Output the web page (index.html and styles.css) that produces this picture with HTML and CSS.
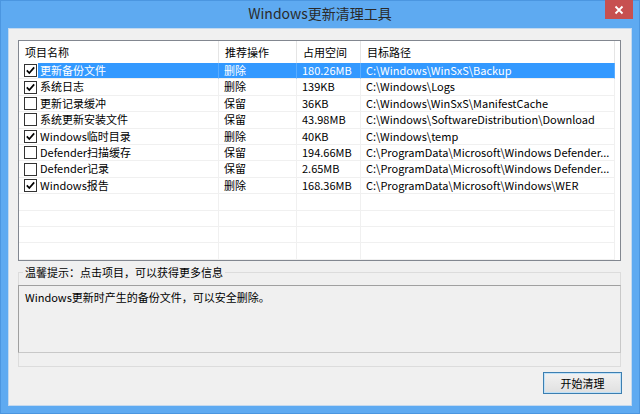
FILE: index.html
```html
<!DOCTYPE html>
<html lang="zh-CN">
<head>
  <meta charset="UTF-8" />
  <title>Windows更新清理工具</title>
  <link rel="stylesheet" href="styles.css">
</head>
<body>
  <div class="window">
    <header class="titlebar">
      <span></span>
      <h1 class="title">Windows更新清理工具</h1>
      <button class="close" aria-label="关闭">
        <svg width="10" height="10" viewBox="0 0 10 10"><path d="M1.5 1.5 L8.5 8.5 M8.5 1.5 L1.5 8.5" stroke="#fff" stroke-width="1.8"/></svg>
      </button>
    </header>

    <main class="client">
      <div class="list">
        <div class="row head">
          <div class="cell">项目名称</div>
          <div class="cell">推荐操作</div>
          <div class="cell">占用空间</div>
          <div class="cell">目标路径</div>
        </div>

        <div class="row selected">
          <div class="cell name"><span class="check"><svg viewBox="0 0 11 11"><path d="M1.8 5.4 L4.3 8 L9.2 2.4"/></svg></span><span class="label">更新备份文件</span></div>
          <div class="cell">删除</div>
          <div class="cell">180.26MB</div>
          <div class="cell">C:\Windows\WinSxS\Backup</div>
        </div>
        <div class="row">
          <div class="cell name"><span class="check"><svg viewBox="0 0 11 11"><path d="M1.8 5.4 L4.3 8 L9.2 2.4"/></svg></span><span class="label">系统日志</span></div>
          <div class="cell">删除</div>
          <div class="cell">139KB</div>
          <div class="cell">C:\Windows\Logs</div>
        </div>
        <div class="row">
          <div class="cell name"><span class="check"></span><span class="label">更新记录缓冲</span></div>
          <div class="cell">保留</div>
          <div class="cell">36KB</div>
          <div class="cell">C:\Windows\WinSxS\ManifestCache</div>
        </div>
        <div class="row">
          <div class="cell name"><span class="check"></span><span class="label">系统更新安装文件</span></div>
          <div class="cell">保留</div>
          <div class="cell">43.98MB</div>
          <div class="cell">C:\Windows\SoftwareDistribution\Download</div>
        </div>
        <div class="row">
          <div class="cell name"><span class="check"><svg viewBox="0 0 11 11"><path d="M1.8 5.4 L4.3 8 L9.2 2.4"/></svg></span><span class="label">Windows临时目录</span></div>
          <div class="cell">删除</div>
          <div class="cell">40KB</div>
          <div class="cell">C:\Windows\temp</div>
        </div>
        <div class="row">
          <div class="cell name"><span class="check"></span><span class="label">Defender扫描缓存</span></div>
          <div class="cell">保留</div>
          <div class="cell">194.66MB</div>
          <div class="cell">C:\ProgramData\Microsoft\Windows Defender...</div>
        </div>
        <div class="row">
          <div class="cell name"><span class="check"></span><span class="label">Defender记录</span></div>
          <div class="cell">保留</div>
          <div class="cell">2.65MB</div>
          <div class="cell">C:\ProgramData\Microsoft\Windows Defender...</div>
        </div>
        <div class="row">
          <div class="cell name"><span class="check"><svg viewBox="0 0 11 11"><path d="M1.8 5.4 L4.3 8 L9.2 2.4"/></svg></span><span class="label">Windows报告</span></div>
          <div class="cell">删除</div>
          <div class="cell">168.36MB</div>
          <div class="cell">C:\ProgramData\Microsoft\Windows\WER</div>
        </div>

        <!-- empty rows keep the grid lines going -->
        <div class="row"><div class="cell"></div><div class="cell"></div><div class="cell"></div><div class="cell"></div></div>
        <div class="row"><div class="cell"></div><div class="cell"></div><div class="cell"></div><div class="cell"></div></div>
        <div class="row"><div class="cell"></div><div class="cell"></div><div class="cell"></div><div class="cell"></div></div>
        <div class="row"><div class="cell"></div><div class="cell"></div><div class="cell"></div><div class="cell"></div></div>
      </div>

      <fieldset class="group">
        <legend>温馨提示：点击项目，可以获得更多信息</legend>
        <div class="info">Windows更新时产生的备份文件，可以安全删除。</div>
      </fieldset>

      <div class="actions">
        <button class="btn">开始清理</button>
      </div>
    </main>
  </div>
</body>
</html>
```

FILE: styles.css
```css
body, html {
  margin: 0;
  padding: 0;
  width: 640px;
  height: 414px;
  overflow: hidden;
  font-family: "Noto Sans CJK SC", "Noto Sans", sans-serif;
  font-size: 11px;
  color: #000;
}

.window {
  box-sizing: border-box;
  height: 414px;
  display: flex;
  flex-direction: column;
  background: #5eaaf1;
  border: 1px solid #4b96e0;
}

/* Title bar */
.titlebar {
  height: 27px;
  display: grid;
  grid-template-columns: 1fr auto 1fr;
}

.title {
  margin: 0;
  font-weight: normal;
  font-size: 14px;
  line-height: 25px;
  color: #2a2a2a;
}

.close {
  justify-self: end;
  align-self: start;
  width: 28px;
  height: 19px;
  margin: -1px 6px 0 0;
  padding: 0;
  border: none;
  background: #c75050;
  display: flex;
  justify-content: center;
  align-items: center;
}

/* Client area */
.client {
  flex: 1;
  margin: 0 7px 7px;
  padding: 11px 10px 0 9px;
  background: #f0f0f0;
  border: 1px solid #c3d9ef;
  display: flex;
  flex-direction: column;
}

/* List view */
.list {
  box-sizing: border-box;
  height: 221px;
  background: #fff;
  border: 1px solid #828790;
  overflow: hidden;
}

.row {
  display: grid;
  grid-template-columns: 200px 78px 64px 254px;
  height: 16.4px;
}

.row .cell {
  box-sizing: border-box;
  border-right: 1px solid #f0f0f0;
  border-bottom: 1px solid #f0f0f0;
  padding-left: 5px;
  line-height: 15px;
  white-space: nowrap;
  overflow: hidden;
}

.row.head {
  height: 22px;
}

.row.head .cell {
  border-bottom: none;
  border-right-color: #e5e5e5;
  padding-left: 6px;
  line-height: 22px;
}

.cell.name {
  display: flex;
  align-items: center;
  padding-left: 5px;
}

.check {
  box-sizing: border-box;
  width: 13px;
  height: 13px;
  flex: none;
  border: 1px solid #333;
  background: #fff;
  display: flex;
}

.check svg {
  width: 11px;
  height: 11px;
}

.check path {
  fill: none;
  stroke: #000;
  stroke-width: 1.7;
}

.label {
  flex: 1;
  height: 100%;
  margin-left: 1px;
  padding-left: 2px;
}

.selected .cell {
  background: #3399ff;
  color: #fff;
  border-right-color: #5aadff;
}

.selected .cell.name {
  background: #fff;
  border-right-color: #5aadff;
}

.selected .label {
  background: #3399ff;
  color: #fff;
}

/* Tip group */
.group {
  margin: 3px 0 0;
  padding: 0 0 13px;
  border: 1px solid #dcdcdc;
  min-width: 0;
}

.group legend {
  margin-left: 4px;
  padding: 0 2px;
  line-height: 16px;
  color: #000;
}

.info {
  box-sizing: border-box;
  height: 68px;
  margin: 5px -1px 0;
  padding: 3px 6px;
  background: #f0f0f0;
  border: 1px solid #c8c8c8;
  border-top-color: #a0a0a0;
  border-left-color: #a0a0a0;
}

/* Buttons */
.actions {
  display: flex;
  justify-content: flex-end;
  margin-top: 5px;
  margin-right: -1px;
}

.btn {
  width: 79px;
  height: 22px;
  padding: 0;
  font-family: inherit;
  font-size: 11px;
  color: #000;
  border: 1px solid #3c7fb1;
  background: linear-gradient(180deg, #f2f2f2, #e0e0e0);
  box-shadow: inset 0 0 0 1px #bfe1f8;
}
```
